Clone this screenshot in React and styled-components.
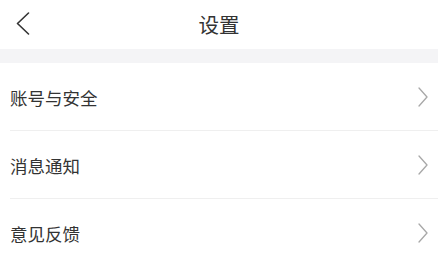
import React from "react";
import styled, { createGlobalStyle } from "styled-components";

const GlobalStyle = createGlobalStyle`
  html, body {
    margin: 0;
    padding: 0;
    background: #ffffff;
  }
  body {
    font-family: "Noto Sans CJK SC", "Noto Sans", sans-serif;
    color: #333333;
  }
`;

const items = ["账号与安全", "消息通知", "意见反馈"];

export default function App() {
  return (
    <>
      <GlobalStyle />
      <Page>
        <Header>
          <BackButton aria-label="返回">
            <svg width="14" height="23" viewBox="0 0 14 23" fill="none">
              <polyline
                points="12.5,1 1.5,11.5 12.5,22"
                stroke="#333"
                strokeWidth="1.6"
                strokeLinecap="round"
                strokeLinejoin="round"
              />
            </svg>
          </BackButton>
          <Title>设置</Title>
        </Header>
        <Band />
        <List>
          {items.map((label) => (
            <Row key={label}>
              <Label>{label}</Label>
              <svg width="10" height="20" viewBox="0 0 10 20" fill="none">
                <polyline
                  points="1,1 9,10 1,19"
                  stroke="#a8a8a8"
                  strokeWidth="1.3"
                  strokeLinecap="round"
                  strokeLinejoin="round"
                />
              </svg>
            </Row>
          ))}
        </List>
      </Page>
    </>
  );
}

const Page = styled.div`
  width: 438px;
  height: 260px;
  overflow: hidden;
  background: #fff;
`;

const Header = styled.div`
  position: relative;
  height: 49px;
  display: flex;
  align-items: center;
  justify-content: center;
`;

const BackButton = styled.button`
  position: absolute;
  left: 16px;
  top: 12px;
  padding: 0;
  border: 0;
  background: none;
  display: flex;
`;

const Title = styled.div`
  font-size: 20.5px;
  line-height: 1;
  color: #333;
  margin-top: 0px;
`;

const Band = styled.div`
  height: 14px;
  background: #f4f4f6;
`;

const List = styled.div`
  display: flex;
  flex-direction: column;
`;

const Row = styled.div`
  height: 67px;
  margin-left: 10px;
  padding-right: 10px;
  border-bottom: 1px solid #efefef;
  display: flex;
  align-items: center;
  justify-content: space-between;
`;

const Label = styled.span`
  font-size: 17.5px;
  line-height: 1;
  color: #333;
  margin-top: 2px;
`;
